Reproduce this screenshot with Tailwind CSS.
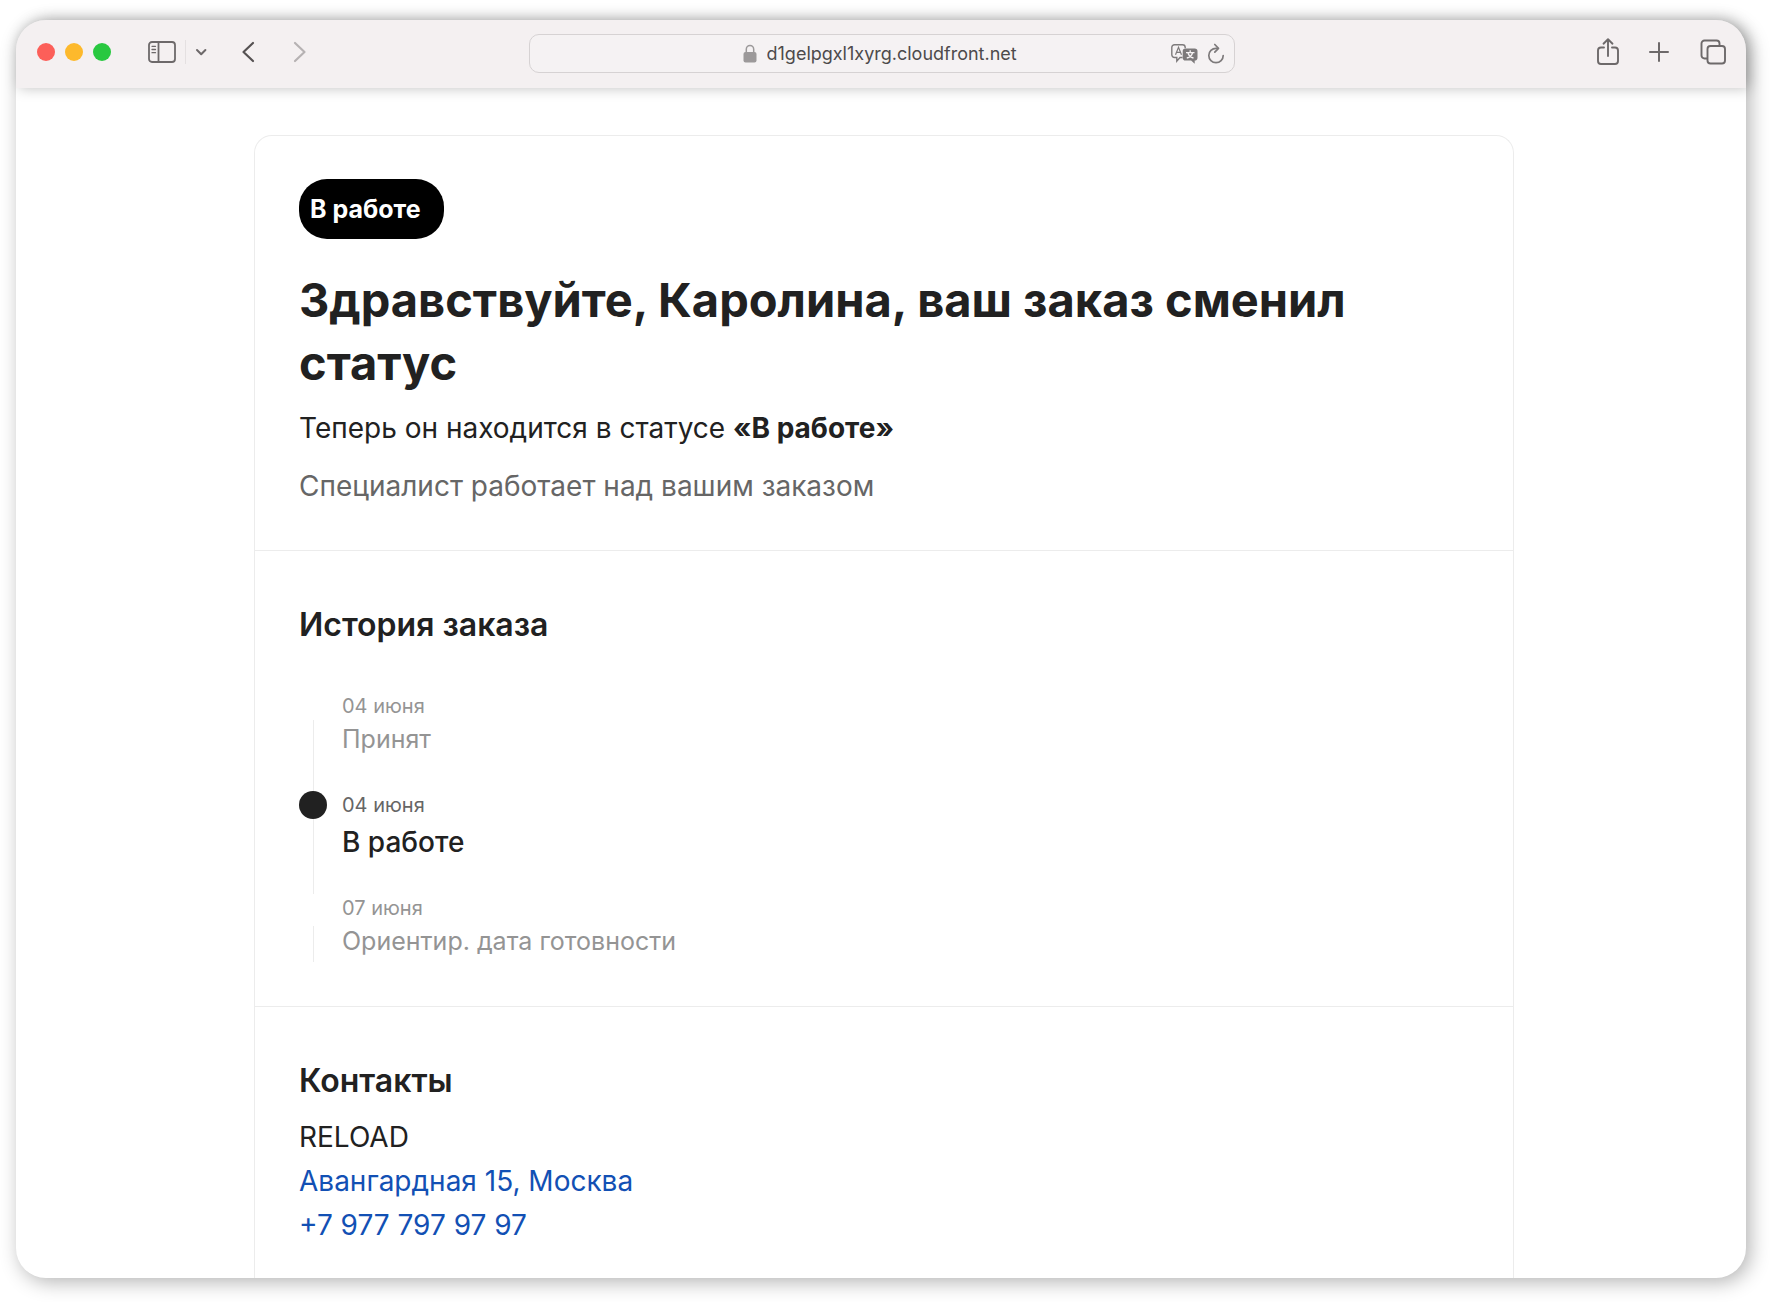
<!DOCTYPE html>
<html lang="ru">
<head>
<meta charset="utf-8">
<title>Статус заказа</title>
<script src="https://cdn.jsdelivr.net/npm/@tailwindcss/browser@4"></script>
</head>
<body class="bg-white font-['Inter','Noto_Sans',sans-serif] text-[#212121]">
<div class="flex min-h-screen flex-col pt-5 pr-6 pb-6 pl-4">
  <div class="flex flex-1 flex-col rounded-[30px] bg-white shadow-[4px_4px_20px_rgba(0,0,0,0.3)]">
    <header class="flex h-[68px] items-center justify-between rounded-t-[30px] bg-[#f4f0f1] pr-5 pb-1 pl-[21px] text-[#6d696a] shadow-[3px_0_14px_rgba(0,0,0,0.25)]">
      <div class="flex w-[491px] items-center">
        <div class="flex gap-2.5">
          <button aria-label="Закрыть" class="size-[18px] rounded-full bg-[#fc5f59]"></button>
          <button aria-label="Свернуть" class="size-[18px] rounded-full bg-[#fdb92c]"></button>
          <button aria-label="Развернуть" class="size-[18px] rounded-full bg-[#29c840]"></button>
        </div>
        <button aria-label="Боковая панель" class="ml-9">
          <svg class="block" width="30" height="24" viewBox="0 0 30 24" fill="none" stroke="currentColor" stroke-width="1.8"><rect x="2" y="2" width="26" height="20" rx="3"/><path d="M11.5 2v20"/><path d="M5 6.3h3.5M5 9.5h3.5M5 12.7h3.5" stroke-width="1.3" stroke-linecap="round"/></svg>
        </button>
        <div class="ml-2 h-6 w-px bg-[#e4e0e1]"></div>
        <button aria-label="Группы вкладок" class="ml-2">
          <svg class="block" width="14" height="10" viewBox="0 0 14 10" fill="none" stroke="currentColor" stroke-width="2" stroke-linecap="round" stroke-linejoin="round"><path d="M3 3l4.200 4.200L11.400 3"/></svg>
        </button>
        <button aria-label="Назад" class="ml-8 text-[#555152]">
          <svg class="block" width="16" height="24" viewBox="0 0 16 24" fill="none" stroke="currentColor" stroke-width="2.200" stroke-linecap="round" stroke-linejoin="round"><path d="M13 3L3.500 12l9.500 9"/></svg>
        </button>
        <button aria-label="Вперёд" class="ml-9 text-[#b6b2b3]">
          <svg class="block" width="16" height="24" viewBox="0 0 16 24" fill="none" stroke="currentColor" stroke-width="2.200" stroke-linecap="round" stroke-linejoin="round"><path d="M3 3l9.500 9L3 21"/></svg>
        </button>
      </div>
      <div class="mt-[3px] flex h-[39px] w-[706px] items-center rounded-[10px] border border-[#d6d2d3] bg-[#f5f2f3] pr-2 pl-[213px]">
        <svg width="14" height="19" viewBox="0 0 14 19"><rect x="0.500" y="8" width="13" height="10.500" rx="2" fill="#9c999a"/><path d="M3.300 8.500V5.200a3.700 3.700 0 0 1 7.400 0V8.500" fill="none" stroke="#9c999a" stroke-width="1.500"/></svg>
        <input aria-label="Адрес" value="d1gelpgxl1xyrg.cloudfront.net" class="ml-2.5 min-w-0 flex-1 bg-transparent text-lg text-[#4d4a4b] outline-none">
        <button aria-label="Перевести" class="text-[#7d7a7b]">
          <svg class="block" width="30" height="22" viewBox="0 0 30 22"><path d="M12.500 14.500H10l-3.200 3.600v-3.600H4.500A2.700 2.700 0 0 1 1.800 11.800V4.500A2.700 2.700 0 0 1 4.500 1.800h8a2.700 2.700 0 0 1 2.700 2.700v.8" fill="none" stroke="currentColor" stroke-width="1.400"/><path d="M5.500 11.800L8.500 4.300l3 7.500M6.500 9.300h4" fill="none" stroke="currentColor" stroke-width="1.200"/><path d="M15.500 5.500h9.200a2.800 2.800 0 0 1 2.800 2.800v6.400a2.800 2.800 0 0 1-2.800 2.800v3.300l-3.600-3.300h-5.600a2.800 2.800 0 0 1-2.800-2.800V8.300a2.800 2.800 0 0 1 2.800-2.800z" fill="currentColor"/><path d="M20.200 7.200v2M16 9.700h8.500M18 10c.8 2.600 2.800 4.300 5.500 5M22.500 10c-.8 2.600-2.800 4.300-5.700 5" fill="none" stroke="#f5f2f3" stroke-width="1.300"/></svg>
        </button>
        <button aria-label="Обновить" class="ml-1.5 text-[#7d7a7b]">
          <svg class="block" width="20" height="22" viewBox="0 0 20 22" fill="none" stroke="currentColor" stroke-width="1.700" stroke-linecap="round" stroke-linejoin="round"><path d="M11.500 5.300H10a7.200 7.200 0 1 0 7.200 7.200"/><path d="M8.800 1.500l3.700 3.800-3.700 3.800"/></svg>
        </button>
      </div>
      <div class="flex w-[491px] items-center justify-end">
        <button aria-label="Поделиться">
          <svg class="block" width="24" height="30" viewBox="0 0 24 30" fill="none" stroke="currentColor" stroke-width="1.900" stroke-linecap="round" stroke-linejoin="round"><path d="M8 10.500H5A3 3 0 0 0 2 13.500V24a3 3 0 0 0 3 3h14a3 3 0 0 0 3-3V13.500a3 3 0 0 0-3-3h-3"/><path d="M12 19V2.500M7.500 6.700L12 2.300l4.500 4.400"/></svg>
        </button>
        <button aria-label="Новая вкладка" class="ml-7">
          <svg class="block" width="22" height="22" viewBox="0 0 22 22" stroke="currentColor" stroke-width="2" stroke-linecap="round"><path d="M11 2v18M2 11h18"/></svg>
        </button>
        <button aria-label="Обзор вкладок" class="ml-[30px]">
          <svg class="block" width="26" height="26" viewBox="0 0 26 26" fill="none" stroke="currentColor" stroke-width="1.900"><rect x="7.500" y="7" width="17.500" height="17.500" rx="3"/><path d="M7.500 19.500H4.500a3 3 0 0 1-3-3V4.500a3 3 0 0 1 3-3h12a3 3 0 0 1 3 3V7"/></svg>
        </button>
      </div>
    </header>

    <main class="flex flex-1 flex-col pt-[47px] pr-[232px] pl-[238px]">
      <article class="flex-1 rounded-t-[18px] border border-b-0 border-[#ececec]">
        <section class="border-b border-[#ececec] px-11 pt-[43px] pb-[42px]">
          <span class="inline-flex h-[60px] w-[145px] items-center rounded-[28px] bg-black pt-0.5 pl-[11px] text-[25px] font-bold text-white">В работе</span>
          <h1 class="mt-[29px] text-[47px] leading-[63px] font-bold">Здравствуйте, Каролина, ваш заказ сменил статус</h1>
          <p class="mt-3 text-[28px] leading-[44px]">Теперь он находится в статусе <strong>«В работе»</strong></p>
          <p class="mt-3.5 text-[28px] leading-[44px] text-[#666]">Специалист работает над вашим заказом</p>
        </section>
        <section class="border-b border-[#ececec] px-11 pt-[52px] pb-11">
          <h2 class="text-[32px] leading-[44px] font-semibold">История заказа</h2>
          <ol class="mt-[45px]">
            <li class="flex gap-[15px]">
              <div class="flex w-7 flex-col items-center pt-7"><div class="w-px flex-1 bg-[#ececec]"></div></div>
              <div class="pb-[33px] text-[#949494]"><p class="text-[20px] leading-7">04 июня</p><p class="text-[25px] leading-[38px]">Принят</p></div>
            </li>
            <li class="flex gap-[15px]">
              <div class="flex w-7 flex-col items-center"><div class="size-7 rounded-full bg-[#212121]"></div><div class="w-px flex-1 bg-[#ececec]"></div></div>
              <div class="pb-[29px]"><p class="text-[20px] leading-7 text-[#666]">04 июня</p><p class="text-[28px] leading-[46px] font-medium">В работе</p></div>
            </li>
            <li class="flex gap-[15px]">
              <div class="flex w-7 flex-col items-center pt-8"><div class="w-px flex-1 bg-[#ececec]"></div></div>
              <div class="pb-0.5 text-[#949494]"><p class="text-[20px] leading-7">07 июня</p><p class="text-[25px] leading-[38px]">Ориентир. дата готовности</p></div>
            </li>
          </ol>
        </section>
        <section class="px-11 pt-[52px]">
          <h2 class="text-[32px] leading-[44px] font-semibold">Контакты</h2>
          <address class="mt-3 flex flex-col items-start text-[28px] leading-[44px] not-italic">
            <span>RELOAD</span>
            <a href="#map" class="text-[#1250b4]">Авангардная 15, Москва</a>
            <a href="tel:+79777979797" class="text-[#1250b4]">+7 977 797 97 97</a>
          </address>
        </section>
      </article>
    </main>
  </div>
</div>
</body>
</html>
